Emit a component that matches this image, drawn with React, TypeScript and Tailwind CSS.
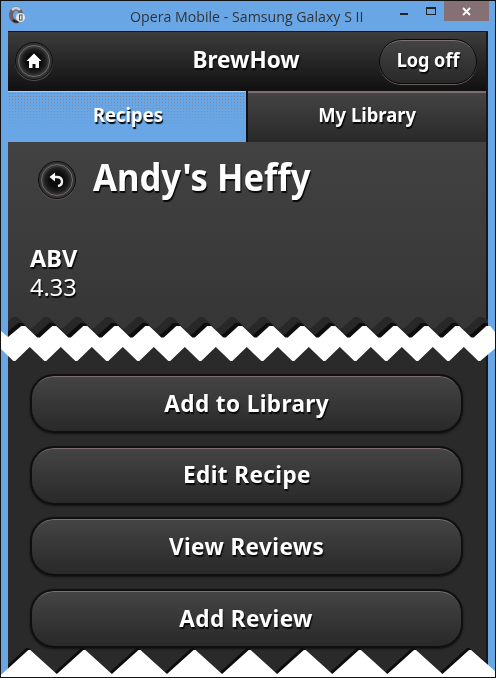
import React from "react";

const topEdge = (dx: number, dy: number) => {
  const pts: string[] = [`${1},${331 + dy}`, `${8 + dx},${337 + dy}`];
  for (let i = 0; i < 16; i++) {
    const x = 23.3 + i * 31 + dx;
    pts.push(`${x - 2},${326 + dy}`, `${x + 2},${326 + dy}`);
    if (i < 15) pts.push(`${x + 14},${337.5 + dy}`, `${x + 16.5},${337.5 + dy}`);
  }
  pts.push(`495,${332 + dy}`);
  return pts;
};

const bottomEdge = () => {
  const pts: string[] = ["495,348.5"];
  for (let i = 15; i >= 0; i--) {
    const x = 14.3 + i * 31;
    pts.push(`${x + 1},361`, `${x - 1},361`);
    if (i > 0) pts.push(`${x - 15.5},347`);
  }
  pts.push("1,349");
  return pts;
};

const band = (dx: number, dy: number) => [...topEdge(dx, dy), ...bottomEdge()].join(" ");

const footer = (dx: number, dy: number) => {
  const pts: string[] = ["1,677", `1,${674 + dy}`, `${2 + dx},${674 + dy}`];
  for (let i = 0; i < 9; i++) {
    const x = 29.3 + i * 55.1 + dx;
    pts.push(`${x - 1},${650 + dy}`, `${x + 1},${650 + dy}`);
    if (i < 8) pts.push(`${x + 27.5},${674 + dy}`);
  }
  pts.push(`495,${671 + dy}`, "495,677");
  return pts.join(" ");
};

const shadow = "[text-shadow:1px_2px_1px_#080808]";

function RoundIcon({ children }: { children: React.ReactNode }) {
  return (
    <span className="flex size-[38px] shrink-0 items-center justify-center rounded-full border border-[#0d0d0d] bg-[#343434] p-[2px] shadow-[0_1px_1px_#555]">
      <span className="flex size-full items-center justify-center rounded-full border border-[#776b6b] bg-linear-to-b from-[#383838] to-[#303030]">
        <span className="flex size-[26px] items-center justify-center rounded-full bg-[radial-gradient(#0b0b0b_40%,#282828_75%)]">
          {children}
        </span>
      </span>
    </span>
  );
}

function ActionButton({ label }: { label: string }) {
  return (
    <button className={`h-[59px] w-[433px] rounded-[24px] border-2 border-[#0f0f0f] bg-linear-to-b from-[#454545] to-[#292929] pb-[2px] text-[24px] font-bold leading-none tracking-[0.4px] text-white shadow-[inset_0_2px_0_-1px_#806e70,0_1px_2px_#111] ${shadow}`}>
      <span className="inline-block scale-x-[0.94]">{label}</span>
    </button>
  );
}

export default function App() {
  return (
    <div className="relative flex h-[678px] w-[496px] flex-col overflow-hidden border border-[#111] bg-[#68a6e5] font-['Noto_Sans','Open_Sans',sans-serif] text-white">
      <div className="flex h-[30px] shrink-0 items-start">
        <svg className="ml-[8px] mt-[5px] shrink-0" width="18" height="18" viewBox="0 0 18 18">
          <ellipse cx="7" cy="9" rx="5" ry="6.5" fill="#68a6e5" stroke="#6e5f61" strokeWidth="4" />
          <path d="M3 4 Q7 0 11 4" fill="none" stroke="#d0d0d0" strokeWidth="2.5" />
          <path d="M4 14 Q7 17 10 15" fill="none" stroke="#222" strokeWidth="2" />
          <circle cx="11.5" cy="11.5" r="4.5" fill="#e9e9e9" />
          <rect x="10.5" y="9" width="2.5" height="5" fill="none" stroke="#555" />
        </svg>
        <div className="ml-[103px] w-[236px] origin-left scale-x-[0.945] whitespace-nowrap pt-[5px] font-['Open_Sans',sans-serif] text-[15px] leading-5 text-[#333]">
          Opera Mobile - Samsung Galaxy S II
        </div>
        <div className="ml-[34px] mt-[12px] h-[2px] w-[8px] bg-[#222]" />
        <div className="ml-[18px] mt-[6px] h-[8px] w-[10px] border border-t-2 border-[#222]" />
        <div className="ml-[8px] flex h-[20px] w-[45px] items-center justify-center bg-[#857173]">
          <svg width="9" height="9" viewBox="0 0 9 9"><path d="M1 1 8 8M8 1 1 8" stroke="white" strokeWidth="1.8" /></svg>
        </div>
      </div>

      <div className="ml-[7px] flex h-[646px] w-[480px] shrink-0 flex-col bg-[#2a2a2a]">
        <header className="flex h-[60px] items-center border-t border-[#111] bg-linear-to-b from-[#3d3d3d] to-[#111] pl-[7px] pr-[11px]">
          <div className="-mt-[2px] flex">
            <RoundIcon>
              <svg width="16" height="16" viewBox="0 0 16 16"><path d="M8 .5 15.5 8H13V15H9.5V11H6.5V15H3V8H.5Z" fill="white" /></svg>
            </RoundIcon>
          </div>
          <h1 className={`flex-1 pb-[6px] pl-[60px] text-center text-[24px] font-bold leading-none ${shadow}`}>
            <span className="inline-block scale-x-[0.94]">BrewHow</span>
          </h1>
          <button className={`-mt-[1px] h-[45px] w-[98px] rounded-full border border-[#0b0b0b] bg-linear-to-b from-[#444] to-[#292929] pb-[2px] text-[19px] font-bold leading-none shadow-[inset_0_2px_0_-1px_#806e70,0_1px_0_#665d5e] ${shadow}`}>
            <span className="inline-block scale-x-[0.95]">Log off</span>
          </button>
        </header>
        <nav className="flex h-[51px] shrink-0">
          <div className="relative flex w-[240px] justify-center border-r-2 border-[#111] bg-[#68a6e5] pt-[12px]">
            <div className="absolute inset-x-0 top-0 h-[37px] border-t border-[#d5c3c3] bg-[radial-gradient(circle,#8b787b_0.7px,transparent_0.8px)] bg-size-[3px_3px] [mask-image:linear-gradient(#000,transparent)]" />
            <span className={`relative left-[1px] scale-x-[0.92] text-[20px] font-bold leading-6 ${shadow}`}>Recipes</span>
          </div>
          <div className={`flex w-[238px] justify-center border-t-2 border-[#806e70] bg-linear-to-b from-[#444] to-[#292929] pt-[10px] text-[20px] font-bold leading-6 ${shadow}`}>
            <span className="scale-x-[0.92]">My Library</span>
          </div>
        </nav>
        <main className="flex h-[198px] shrink-0 flex-col bg-linear-to-b from-[#424242] to-[#353535] px-[22px]">
          <div className="flex h-[80px] items-start pl-[8px] pt-[19px]">
            <RoundIcon>
              <svg width="18" height="18" viewBox="0 0 18 18" fill="none" stroke="#eee">
                <path d="M5 6H8.5Q14 6 14 10.5Q14 14.5 10 15" strokeWidth="2.4" />
                <path d="M1.5 6 7 1.5V10.5Z" fill="white" stroke="none" />
              </svg>
            </RoundIcon>
            <h2 className={`ml-[17px] mt-[-4px] origin-left scale-x-[0.935] whitespace-nowrap text-[37px] font-bold leading-[40px] ${shadow}`}>Andy's Heffy</h2>
          </div>
          <dl className={`mt-[21px] text-[24px] leading-[29px] ${shadow}`}>
            <dt className="origin-left scale-x-[0.98] font-bold">ABV</dt>
            <dd className="origin-left scale-x-[0.98]">4.33</dd>
          </dl>
        </main>
        <section className="flex flex-col gap-[12.7px] bg-[#2a2a2a] pl-[22px] pt-[34px]">
          <ActionButton label="Add to Library" />
          <ActionButton label="Edit Recipe" />
          <ActionButton label="View Reviews" />
          <ActionButton label="Add Review" />
        </section>
      </div>
      <div className="absolute left-[485px] top-[30px] h-[646px] w-[2px] bg-[#171717]" />

      <svg className="absolute -left-px -top-px" width="496" height="678" viewBox="0 0 496 678">
        <clipPath id="screen"><rect x="8" y="31" width="480" height="647" /></clipPath>
        <g clipPath="url(#screen)">
          <polygon points={band(-8, -9)} fill="#282828" />
          <polygon points={band(-3, -3)} fill="#0d0d0d" />
        </g>
        <polygon points={band(0, 0)} fill="white" />
        <g clipPath="url(#screen)">
          <polygon points={footer(-2, -2)} fill="#0d0d0d" />
        </g>
        <polygon points={footer(0, 0)} fill="white" />
        <path d="M.5 0V678M495.5 0V678M0 677.5H496" stroke="#111" />
      </svg>
    </div>
  );
}
